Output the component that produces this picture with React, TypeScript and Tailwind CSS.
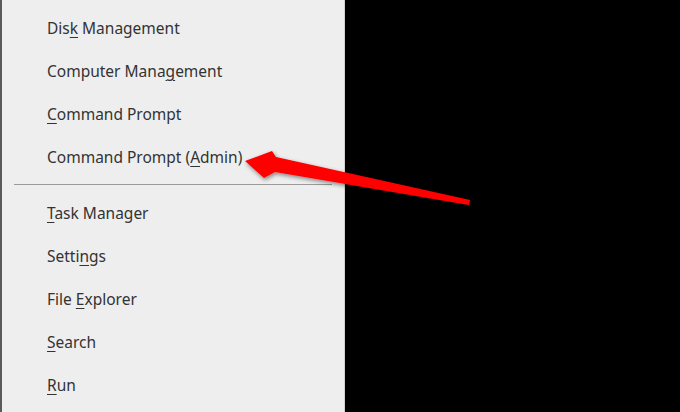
import React from "react";

type Item = { label: string; acc: number };

const groupA: Item[] = [
  { label: "Disk Management", acc: 3 },
  { label: "Computer Management", acc: 13 },
  { label: "Command Prompt", acc: 0 },
  { label: "Command Prompt (Admin)", acc: 16 },
];

const groupB: Item[] = [
  { label: "Task Manager", acc: 0 },
  { label: "Settings", acc: 5 },
  { label: "File Explorer", acc: 5 },
  { label: "Search", acc: 0 },
  { label: "Run", acc: 0 },
];

function MenuRow({ label, acc }: Item) {
  return (
    <div className="h-[43px] flex items-center pl-[45px] text-[15.5px] text-[#333333] whitespace-nowrap">
      <span>
        {label.slice(0, acc)}
        <span className="underline underline-offset-[3px] decoration-1">{label[acc]}</span>
        {label.slice(acc + 1)}
      </span>
    </div>
  );
}

export default function App() {
  return (
    <div
      className="relative w-[680px] h-[412px] bg-black flex overflow-hidden"
      style={{ fontFamily: '"Noto Sans", "Open Sans", sans-serif' }}
    >
      <div className="w-[345px] h-full bg-[#eeeeee] border-l-2 border-[#5a5a5a] border-r border-r-[#d0d0d0] pt-[7px] flex flex-col">
        {groupA.map((it) => (
          <MenuRow key={it.label} label={it.label} acc={it.acc} />
        ))}
        <div className="h-px bg-[#9a9a9a] ml-[12px] mr-[12px] mt-[5px] mb-[7px]" />
        {groupB.map((it) => (
          <MenuRow key={it.label} label={it.label} acc={it.acc} />
        ))}
      </div>

      {/* red arrow */}
      <svg className="absolute inset-0 pointer-events-none" width="680" height="412" viewBox="0 0 680 412">
        <defs>
          <filter id="sh" x="-20%" y="-20%" width="140%" height="140%">
            <feDropShadow dx="1" dy="2" stdDeviation="2" floodColor="#000" floodOpacity="0.45" />
          </filter>
        </defs>
        <polygon
          points="245,161 272,151 276,157 470,200 469,205 275,172 264,178"
          fill="#ff0000"
          filter="url(#sh)"
        />
      </svg>
    </div>
  );
}
